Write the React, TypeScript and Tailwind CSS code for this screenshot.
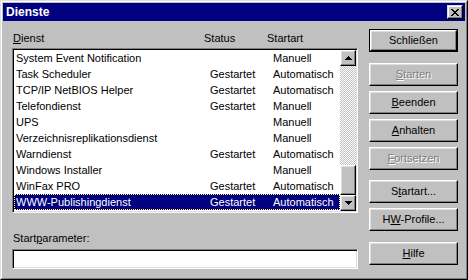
import React from "react";

type Row = { name: string; status: string; start: string };

const rows: Row[] = [
  { name: "System Event Notification", status: "", start: "Manuell" },
  { name: "Task Scheduler", status: "Gestartet", start: "Automatisch" },
  { name: "TCP/IP NetBIOS Helper", status: "Gestartet", start: "Automatisch" },
  { name: "Telefondienst", status: "Gestartet", start: "Manuell" },
  { name: "UPS", status: "", start: "Manuell" },
  { name: "Verzeichnisreplikationsdienst", status: "", start: "Manuell" },
  { name: "Warndienst", status: "Gestartet", start: "Automatisch" },
  { name: "Windows Installer", status: "", start: "Manuell" },
  { name: "WinFax PRO", status: "Gestartet", start: "Automatisch" },
  { name: "WWW-Publishingdienst", status: "Gestartet", start: "Automatisch" },
];

const raised =
  "border border-t-white border-l-white border-r-black border-b-black shadow-[inset_-1px_-1px_#808080,inset_1px_1px_#dfdfdf] bg-[#c0c0c0]";
const raisedThin =
  "border border-t-[#dfdfdf] border-l-[#dfdfdf] border-r-black border-b-black shadow-[inset_-1px_-1px_#808080,inset_1px_1px_#ffffff] bg-[#c0c0c0]";
const sunken =
  "border border-t-[#808080] border-l-[#808080] border-r-white border-b-white shadow-[inset_1px_1px_#000000,inset_-1px_-1px_#dfdfdf]";

function Btn({
  children,
  disabled,
  isDefault,
  className = "",
}: {
  children: React.ReactNode;
  disabled?: boolean;
  isDefault?: boolean;
  className?: string;
}) {
  const inner = (
    <div
      className={`${raised} flex items-center justify-center w-full h-full ${
        disabled ? "text-[#808080] [text-shadow:1px_1px_0_#fff]" : "text-black"
      }`}
    >
      <span>{children}</span>
    </div>
  );
  if (isDefault) {
    return (
      <div className={`border border-black w-[89px] h-[23px] ${className}`}>
        {inner}
      </div>
    );
  }
  return <div className={`w-[89px] h-[23px] ${className}`}>{inner}</div>;
}

function CloseGlyph() {
  const px = [
    [0, 0], [1, 0], [6, 0], [7, 0],
    [1, 1], [2, 1], [5, 1], [6, 1],
    [2, 2], [3, 2], [4, 2], [5, 2],
    [3, 3], [4, 3],
    [2, 4], [3, 4], [4, 4], [5, 4],
    [1, 5], [2, 5], [5, 5], [6, 5],
    [0, 6], [1, 6], [6, 6], [7, 6],
  ];
  return (
    <svg width="8" height="7" viewBox="0 0 8 7" shapeRendering="crispEdges">
      {px.map(([x, y]) => (
        <rect key={`${x}-${y}`} x={x} y={y} width="1" height="1" fill="#000" />
      ))}
    </svg>
  );
}

function Arrow({ up }: { up?: boolean }) {
  return (
    <svg width="7" height="4" viewBox="0 0 7 4" shapeRendering="crispEdges">
      {up ? (
        <>
          <rect x="3" y="0" width="1" height="1" fill="#000" />
          <rect x="2" y="1" width="3" height="1" fill="#000" />
          <rect x="1" y="2" width="5" height="1" fill="#000" />
          <rect x="0" y="3" width="7" height="1" fill="#000" />
        </>
      ) : (
        <>
          <rect x="0" y="0" width="7" height="1" fill="#000" />
          <rect x="1" y="1" width="5" height="1" fill="#000" />
          <rect x="2" y="2" width="3" height="1" fill="#000" />
          <rect x="3" y="3" width="1" height="1" fill="#000" />
        </>
      )}
    </svg>
  );
}

export default function App() {
  return (
    <div
      className="w-[468px] h-[280px] bg-[#c0c0c0] text-[11px] text-black select-none"
      style={{ fontFamily: '"Liberation Sans", Arial, sans-serif' }}
    >
      <div className="w-full h-full border border-t-[#dfdfdf] border-l-[#dfdfdf] border-r-black border-b-black">
        <div className="w-full h-full border border-t-white border-l-white border-r-[#808080] border-b-[#808080] p-px flex flex-col">
          {/* title bar */}
          <div className="h-[18px] bg-[#000080] flex items-center justify-between pl-[3px] pr-[2px]">
            <span className="text-white font-bold text-[12px]">Dienste</span>
            <div className={`${raisedThin} w-[16px] h-[14px] flex items-center justify-center`}>
              <CloseGlyph />
            </div>
          </div>

          {/* body */}
          <div className="flex flex-1 pl-[9px]">
            <div className="w-[346px] flex flex-col pt-[9px]">
              <div className="relative h-[18px] leading-[16px]">
                <span className="absolute left-[1px]">
                  <u>D</u>ienst
                </span>
                <span className="absolute left-[192px]">Status</span>
                <span className="absolute left-[255px]">Startart</span>
              </div>
              <div className={`${sunken} bg-white h-[165px] p-px flex`}>
                <div className="flex-1 flex flex-col">
                  {rows.map((r, i) => {
                    const sel = i === rows.length - 1;
                    return (
                      <div
                        key={r.name}
                        className={`h-[16px] leading-[14px] grid grid-cols-[195px_63px_1fr] whitespace-nowrap ${
                          sel
                            ? "bg-[#000080] text-white border border-dotted border-[#ffff80]"
                            : "border border-transparent"
                        }`}
                      >
                        <span className="pl-[1px]">{r.name}</span>
                        <span>{r.status}</span>
                        <span>{r.start}</span>
                      </div>
                    );
                  })}
                </div>
                <div className="w-[16px] flex flex-col bg-[repeating-conic-gradient(#c0c0c0_0_25%,#ffffff_0_50%)] bg-[length:2px_2px]">
                  <div className={`${raised} h-[16px] flex items-center justify-center`}>
                    <Arrow up />
                  </div>
                  <div className="flex-1" />
                  <div className={`${raised} h-[30px]`} />
                  <div className={`${raised} h-[16px] flex items-center justify-center`}>
                    <Arrow />
                  </div>
                </div>
              </div>
              <div className="mt-[18px] leading-[14px] pl-px">
                Start<u>p</u>arameter:
              </div>
              <div className={`${sunken} bg-white h-[20px] mt-[4px]`} />
            </div>

            <div className="ml-[11px] flex flex-col pt-[8px]">
              <Btn isDefault>Schließen</Btn>
              <Btn disabled className="mt-[11px]">
                <u>S</u>tarten
              </Btn>
              <Btn className="mt-[5px]">
                <u>B</u>eenden
              </Btn>
              <Btn className="mt-[5px]">
                <u>A</u>nhalten
              </Btn>
              <Btn disabled className="mt-[5px]">
                <u>F</u>ortsetzen
              </Btn>
              <Btn className="mt-[10px]">
                S<u>t</u>artart...
              </Btn>
              <Btn className="mt-[5px]">
                H<u>W</u>-Profile...
              </Btn>
              <Btn className="mt-[11px]">
                <u>H</u>ilfe
              </Btn>
            </div>
          </div>
        </div>
      </div>
    </div>
  );
}
